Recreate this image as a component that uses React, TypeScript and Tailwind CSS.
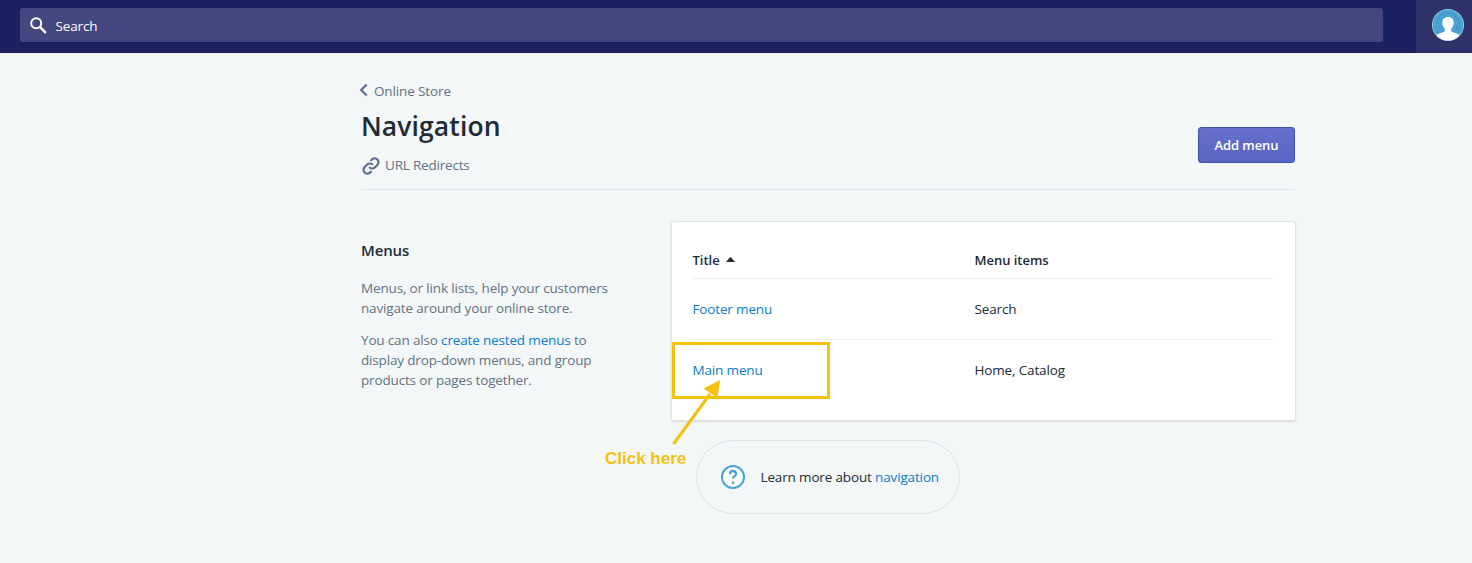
import React from "react";

function TopBar() {
  return (
    <header className="flex h-[53px] bg-[#1c2260]">
      <div className="flex flex-1 pt-2 pr-[33px] pl-5">
        <div className="flex h-[34px] flex-1 items-center rounded-[3px] bg-[#45467f] pl-2.5 text-white">
          <svg width="17" height="17" viewBox="0 0 17 17" fill="none" stroke="#fff" strokeWidth="2">
            <circle cx="6.2" cy="6.2" r="5" />
            <path d="M9.8 9.8l6 6" strokeWidth="2.5" />
          </svg>
          <span className="ml-[8.5px] pt-[2px] text-[13.5px] leading-5 tracking-[-0.15px]">Search</span>
        </div>
      </div>
      <div className="flex w-14 bg-[#2e3269] pt-[9px] pl-4">
        <svg width="32" height="32" viewBox="0 0 32 32">
          <defs>
            <clipPath id="avatar"><circle cx="16" cy="16" r="15.6" /></clipPath>
          </defs>
          <circle cx="16" cy="16" r="16" fill="#a6d3e8" />
          <circle cx="16" cy="16" r="15.2" fill="#47a3d0" />
          <g fill="#5c6ac4">
            <circle cx="9.5" cy="6" r=".6" /><circle cx="12" cy="5" r=".6" /><circle cx="15" cy="4.5" r=".6" />
            <circle cx="18" cy="4.5" r=".6" /><circle cx="21" cy="5" r=".6" /><circle cx="23.5" cy="7" r=".6" />
            <circle cx="6.5" cy="9" r=".6" /><circle cx="5.5" cy="13" r=".6" /><circle cx="4.5" cy="18" r=".6" />
            <circle cx="7.5" cy="19" r=".6" /><circle cx="7" cy="22" r=".6" /><circle cx="25.5" cy="10" r=".6" />
            <circle cx="27" cy="14" r=".6" /><circle cx="25" cy="16" r=".6" /><circle cx="27" cy="18" r=".6" />
            <circle cx="24.5" cy="19" r=".6" /><circle cx="26.5" cy="21" r=".6" />
          </g>
          <g clipPath="url(#avatar)" fill="#fff">
            <path d="M16 8c3.700 0 5.700 2.500 5.700 5.600 0 2.800-1 4.800-2.600 6.200v1.400c0 1 .6 1.500 1.600 1.900L27 25.500V33H5v-7.500l6.300-2.400c1-.4 1.600-.9 1.600-1.900v-1.400c-1.600-1.400-2.600-3.400-2.600-6.200C10.300 10.500 12.300 8 16 8z" />
          </g>
        </svg>
      </div>
    </header>
  );
}

function PageHeader() {
  return (
    <div className="flex border-b border-[#dfe4e8] pb-3.5">
      <div className="flex-1 text-[#637381]">
        <a className="flex items-center text-[13.5px] leading-5">
          <svg className="mt-[-2px] ml-[-2px]" width="9" height="14" viewBox="0 0 9 14" fill="none" stroke="#5f6d91" strokeWidth="2.200">
            <path d="M7.700 1.500L2.200 7l5.500 5.500" />
          </svg>
          <span className="ml-[6px] tracking-[-0.13px]">Online Store</span>
        </a>
        <h1 className="mt-[7px] text-[26.5px] leading-9 font-semibold tracking-[0.1px] text-[#212b36]">Navigation</h1>
        <a className="mt-[11px] flex items-center text-[13.5px] leading-5">
          <svg className="mt-0.5 ml-px" width="18" height="18" viewBox="0 0 24 24" fill="none" stroke="#5f6d91" strokeWidth="2.900">
            <path d="M9.500 13.500a5.200 5.200 0 0 0 7.600.4l3.600-3.600a5.100 5.100 0 0 0-7.200-7.200l-2.200 2.200" />
            <path d="M14.500 10.500a5.200 5.200 0 0 0-7.600-.4l-3.600 3.600a5.100 5.100 0 0 0 7.200 7.200l2.200-2.200" />
          </svg>
          <span className="ml-[5px] tracking-[-0.2px]">URL Redirects</span>
        </a>
      </div>
      <button className="mt-[46px] h-9 w-[97px] rounded-[3px] border border-[#3b54b3] bg-linear-to-b from-[#6570ca] to-[#5965c2] pt-0.5 text-[13px] font-semibold tracking-[-0.1px] text-white">
        Add menu
      </button>
    </div>
  );
}

function MenuTable() {
  return (
    <div className="relative h-[200px] w-[625px] shrink-0 rounded-[3px] border border-[#dfe3e8] bg-white pr-[22px] pl-[20.5px] pt-[28px] text-[13.5px] leading-5 tracking-[-0.15px] text-[#212b36] shadow-[0_1px_2px_rgba(63,63,68,0.15)]">
      <div className="flex h-[29px] border-b border-[#ebeef0] text-[13px] font-semibold tracking-[-0.02px]">
        <div className="flex w-[282px]">
          <span>Title</span>
          <svg className="mt-[7px] ml-[6px]" width="9" height="5" viewBox="0 0 9 5" fill="#212b36">
            <path d="M0 5L4 .3h1L9 5z" />
          </svg>
        </div>
        <span>Menu items</span>
      </div>
      <div className="flex h-[61px] items-center border-b border-[#ebeef0]">
        <a className="w-[282px] text-[#087dcf]">Footer menu</a>
        <span>Search</span>
      </div>
      <div className="flex h-[60px] items-center">
        <a className="w-[282px] text-[#087dcf]">Main menu</a>
        <span>Home, Catalog</span>
      </div>
      <div className="absolute top-[120px] left-0 h-[57px] w-[158px] border-3 border-[#f4c20d]" />
      <svg className="absolute top-[158px] left-0" width="50" height="66" viewBox="0 0 50 66">
        <path d="M1.500 64L38 14" stroke="#f4c20d" strokeWidth="3" />
        <path d="M48 0L31.500 8.500L45.500 18z" fill="#f4c20d" />
      </svg>
      <span className="absolute top-[227px] left-[-67px] font-['Liberation_Sans',sans-serif] text-[17px] leading-5 font-bold tracking-normal whitespace-nowrap text-[#f4c20d]">
        Click here
      </span>
    </div>
  );
}

export default function App() {
  return (
    <div className="h-[563px] overflow-hidden bg-[#f3f7f8] font-['Open_Sans','Noto_Sans',sans-serif]">
      <TopBar />
      <main className="ml-[361px] w-[934px] pt-7">
        <PageHeader />
        <div className="mt-[31px] flex">
          <section className="w-[310px] shrink-0 pt-[19px] text-[13.5px] leading-5 tracking-[-0.16px] text-[#637381]">
            <h2 className="text-[15px] leading-5 font-semibold text-[#212b36]">Menus</h2>
            <p className="mt-[18px] whitespace-nowrap">
              Menus, or link lists, help your customers<br />
              navigate around your online store.
            </p>
            <p className="mt-3 whitespace-nowrap">
              You can also <a className="text-[#087dcf]">create nested menus</a> to<br />
              display drop-down menus, and group<br />
              products or pages together.
            </p>
          </section>
          <MenuTable />
        </div>
        <div className="mt-[19px] ml-[335px] flex h-[74px] w-[264px] items-center rounded-full border border-[#dfe3e6] pl-6 text-[13.5px] tracking-[-0.15px] text-[#212b36]">
          <svg width="24" height="24" viewBox="0 0 24 24" fill="none" stroke="#47a3d0" strokeWidth="2">
            <circle cx="12" cy="12" r="11" fill="#fff" />
            <path d="M9 9.300C9 7.200 10.300 6 12 6s3 1.200 3 2.900c0 2.300-3 2.300-3 4.800" strokeWidth="2.300" />
            <path d="M12 16.500v2.300" strokeWidth="2.300" />
          </svg>
          <span className="ml-[15.5px] whitespace-nowrap">Learn more about <a className="text-[#087dcf]">navigation</a></span>
        </div>
      </main>
    </div>
  );
}
